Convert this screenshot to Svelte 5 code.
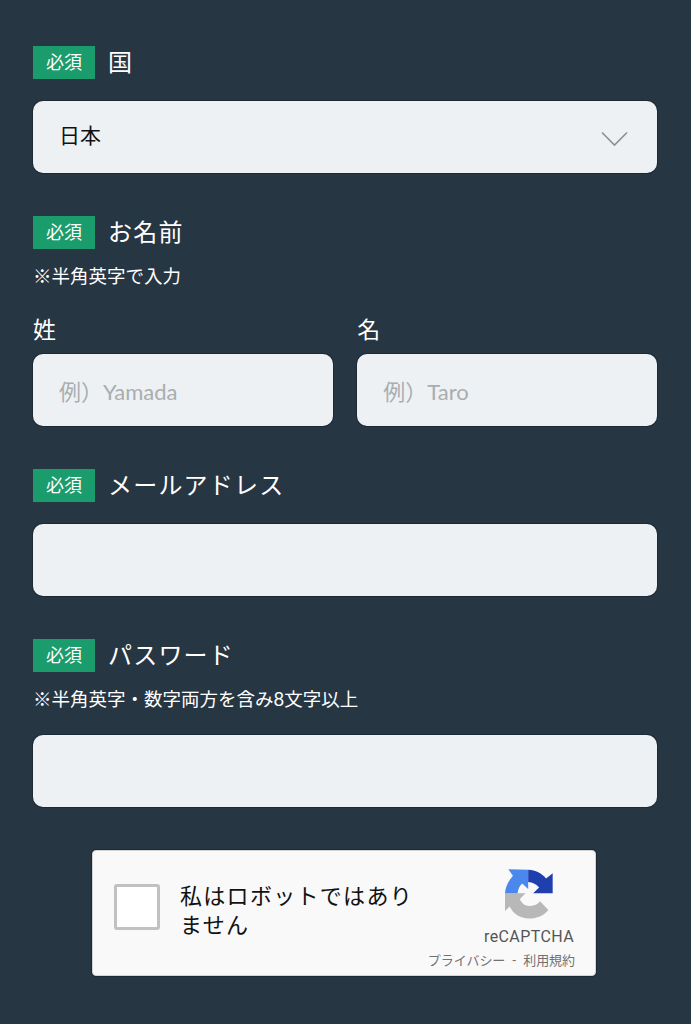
<script>
  // Text fields of the sign-up form, in page order
  let country = $state('日本');
  let lastName = $state('');
  let firstName = $state('');
  let email = $state('');
  let password = $state('');
  let robot = $state(false);
</script>

<main class="form">
  <section class="group">
    <div class="heading">
      <span class="badge">必須</span>
      <label class="title" for="country">国</label>
    </div>
    <div class="select-wrap">
      <select id="country" class="field select" bind:value={country}>
        <option>日本</option>
      </select>
      <svg class="chevron" width="27" height="16" viewBox="0 0 27 16" fill="none">
        <path d="M1 1.5L13.5 14L26 1.5" stroke="#8b9094" stroke-width="1.6" />
      </svg>
    </div>
  </section>

  <section class="group">
    <div class="heading">
      <span class="badge">必須</span>
      <span class="title">お名前</span>
    </div>
    <p class="note">※半角英字で入力</p>
    <div class="name-row">
      <div class="name-col">
        <label class="sub" for="last">姓</label>
        <input id="last" class="field" placeholder="例）Yamada" bind:value={lastName} />
      </div>
      <div class="name-col">
        <label class="sub" for="first">名</label>
        <input id="first" class="field" placeholder="例）Taro" bind:value={firstName} />
      </div>
    </div>
  </section>

  <section class="group">
    <div class="heading">
      <span class="badge">必須</span>
      <label class="title" for="email">メールアドレス</label>
    </div>
    <input id="email" class="field" type="email" bind:value={email} />
  </section>

  <section class="group">
    <div class="heading">
      <span class="badge">必須</span>
      <label class="title" for="password">パスワード</label>
    </div>
    <p class="note pw-note">※半角英字・数字両方を含み8文字以上</p>
    <input id="password" class="field" type="password" bind:value={password} />
  </section>

  <div class="captcha">
    <button class="check" class:checked={robot} aria-label="私はロボットではありません" onclick={() => (robot = !robot)}></button>
    <p class="captcha-text">私はロボットではあり<br />ません</p>
    <div class="captcha-brand">
      <svg class="logo" width="48" height="50" viewBox="105 42 145 150">
        <path fill="#b8b8b8" d="M105 115H167L150 132C156 146 166 153 178 153C192 154 203 149 211 139L236 165C222 182 202 191 178 191C150 191 130 177 119 155L105 168Z" />
        <path fill="#4a88ee" d="M115 42L175 44V102L157 85C149 92 144 103 143 115H105C106 96 115 78 129 62Z" />
        <path fill="#1f3fae" d="M175 44C198 45 216 55 229 70L249 54V115H190L208 97C200 88 189 82 175 81Z" />
      </svg>
      <span class="brand-name">reCAPTCHA</span>
      <span class="brand-links">プライバシー&nbsp;&nbsp;-&nbsp;&nbsp;利用規約</span>
    </div>
  </div>
</main>

<style>
  :global(body) {
    margin: 0;
    background: #273643;
  }

  .form {
    display: flex;
    flex-direction: column;
    gap: 43px;
    padding: 46px 34px 48px 33px;
    font-family: Lato, "Noto Sans CJK JP", sans-serif;
    color: #ffffff;
  }

  .group {
    display: flex;
    flex-direction: column;
  }

  .heading {
    display: flex;
    align-items: center;
    gap: 13px;
    height: 33px;
    margin-bottom: 22px;
  }

  .badge {
    display: flex;
    align-items: center;
    justify-content: center;
    width: 62px;
    height: 33px;
    padding-bottom: 3px;
    box-sizing: border-box;
    background: #1a9c6d;
    font-size: 18px;
  }

  .title {
    font-size: 24px;
    line-height: 33px;
    letter-spacing: 1.2px;
    padding-bottom: 3px;
  }

  .note {
    margin: -10px 0 0;
    font-size: 18.5px;
    line-height: 30px;
  }

  .pw-note {
    margin-bottom: 21px;
  }

  .field {
    box-sizing: border-box;
    display: block;
    width: 100%;
    height: 72px;
    padding: 2px 26px 0;
    border: none;
    border-radius: 10px;
    background: #edf1f4;
    font-family: inherit;
    font-size: 22px;
    color: #111111;
    outline: none;
    box-shadow: 0 0 0 1px #1d2a36;
  }

  .field::placeholder {
    color: #a9adb0;
    opacity: 1;
  }

  .select-wrap {
    position: relative;
  }

  .select {
    appearance: none;
    padding: 0 26px 6px;
    font-size: 21px;
  }

  .chevron {
    position: absolute;
    top: 30px;
    right: 29px;
    pointer-events: none;
  }

  .name-row {
    display: grid;
    grid-template-columns: 1fr 1fr;
    gap: 24.5px;
    margin-top: 22px;
  }

  .name-col {
    display: flex;
    flex-direction: column;
    gap: 9px;
  }

  .sub {
    font-size: 23px;
    line-height: 32px;
  }

  .captcha {
    box-sizing: border-box;
    display: flex;
    align-items: center;
    align-self: flex-start;
    position: relative;
    width: 504px;
    height: 126px;
    margin-left: 59px;
    padding: 0 0 12px 21px;
    border-radius: 4px;
    background: #f9f9f9;
    border: 1px solid #d3d3d3;
    box-shadow: 0 0 0 1px #1d2a36;
    color: #111111;
  }

  .check {
    flex: none;
    box-sizing: border-box;
    width: 46px;
    height: 46px;
    padding: 0;
    border: 3px solid #c1c1c1;
    border-radius: 3px;
    background: #ffffff;
  }

  .captcha-text {
    margin: 6px 0 0 20px;
    font-size: 22px;
    line-height: 29px;
    letter-spacing: 1.3px;
  }

  .captcha-brand {
    position: absolute;
    top: 0;
    right: 0;
    bottom: 0;
    display: flex;
    flex-direction: column;
    align-items: flex-end;
  }

  .logo {
    margin: 18px 42px 0 0;
  }

  .brand-name {
    margin: 8px 21px 0 0;
    font-family: Roboto, sans-serif;
    font-size: 16px;
    line-height: 20px;
    letter-spacing: 0.4px;
    color: #555555;
  }

  .brand-links {
    margin: 3px 20px 0 0;
    font-size: 13px;
    line-height: 20px;
    letter-spacing: -0.05px;
    color: #717171;
    white-space: nowrap;
  }
</style>
